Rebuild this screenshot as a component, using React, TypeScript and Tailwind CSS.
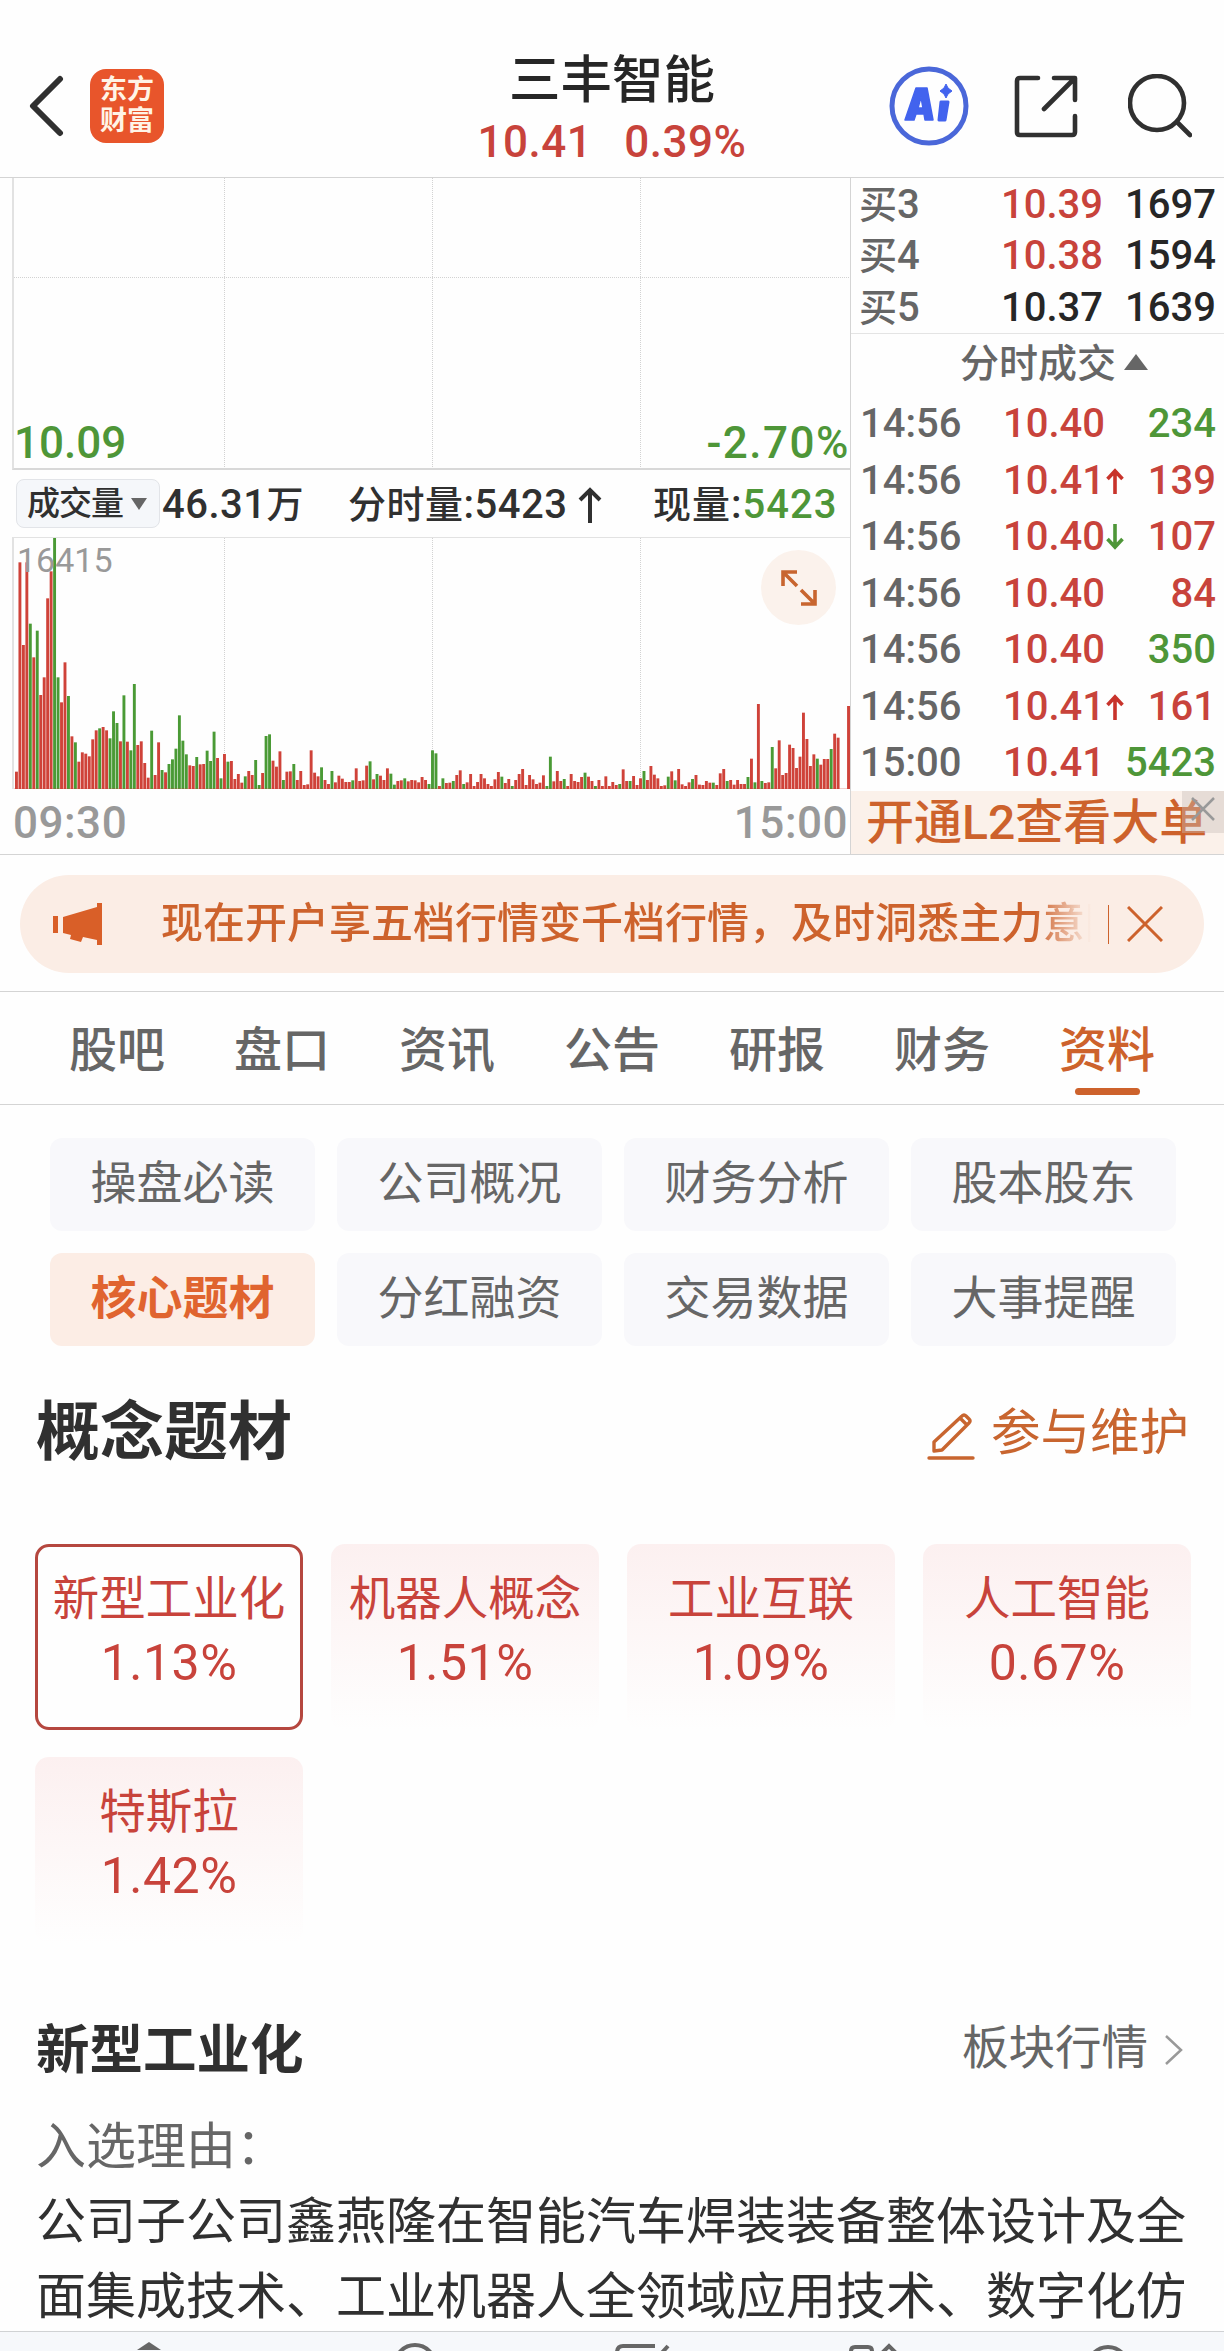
import clsx from "clsx";

type Trade = {
  time: string;
  price: string;
  volume: string;
  up: boolean;
  arrow?: "up" | "down";
};

const bids = [
  { label: "买3", price: "10.39", volume: "1697", up: true },
  { label: "买4", price: "10.38", volume: "1594", up: true },
  { label: "买5", price: "10.37", volume: "1639", up: false },
];

const trades: Trade[] = [
  { time: "14:56", price: "10.40", volume: "234", up: false },
  { time: "14:56", price: "10.41", volume: "139", up: true, arrow: "up" },
  { time: "14:56", price: "10.40", volume: "107", up: true, arrow: "down" },
  { time: "14:56", price: "10.40", volume: "84", up: true },
  { time: "14:56", price: "10.40", volume: "350", up: false },
  { time: "14:56", price: "10.41", volume: "161", up: true, arrow: "up" },
  { time: "15:00", price: "10.41", volume: "5423", up: false },
];

const tabs = ["股吧", "盘口", "资讯", "公告", "研报", "财务", "资料"];

const subTabs = [
  "操盘必读",
  "公司概况",
  "财务分析",
  "股本股东",
  "核心题材",
  "分红融资",
  "交易数据",
  "大事提醒",
];

const concepts = [
  { name: "新型工业化", change: "1.13%" },
  { name: "机器人概念", change: "1.51%" },
  { name: "工业互联", change: "1.09%" },
  { name: "人工智能", change: "0.67%" },
  { name: "特斯拉", change: "1.42%" },
];

// volume per minute, a negative value is a falling minute
const volumes = [
  52, 680, 432, 680, -496, 395, -475, 282, 335, 572, 653, -754, -335, 260, 380,
  -279, 158, -140, 82, 110, 106, 98, 149, 176, -182, 186, 176, -152, -233, -198,
  143, -281, 142, -116, -315, 132, 143, 78, 34, -175, 42, 140, -57, 50, -75,
  -89, -121, -221, -145, -104, 71, 69, -96, 74, 75, -115, -84, -172, 93, -32,
  105, -82, 84, 30, 45, 19, -38, 54, 42, -87, -12, 48, -159, -164, 85, 67, 113,
  -27, 52, 53, -75, 27, 54, 12, 14, 116, 49, 38, -65, 27, 15, -54, 20, 40, 31,
  21, 21, -26, 62, 24, 26, 70, -83, 29, -45, 40, 27, 62, -46, -13, 24, 26, -32,
  23, 27, 26, 20, 36, 27, -15, -116, -107, 9, -32, 18, 19, -24, 42, 56, -15, 20,
  45, 9, 21, 45, 32, 15, 9, 29, 51, -37, 18, 30, -9, 27, 45, 60, 12, 42, 29, 15,
  19, 41, -9, -97, 23, 54, 24, -30, 9, 45, 24, 21, 36, -49, 37, 24, -9, 27, 9,
  38, 9, 21, 12, -15, 59, 24, -24, 39, 12, 32, -54, 27, 69, 43, 32, 9, 11, -37,
  53, -26, 60, 14, 9, 20, -30, 42, 13, 12, 24, 19, -19, 12, 47, 60, -24, 27, 13,
  27, 15, 15, -36, 91, -20, 255, -24, 18, 20, -126, 62, 146, 42, 48, 133, 123,
  63, 97, 229, 150, 69, 104, -91, 73, 90, 90, -120, 166, 154, 0, 0, 249,
];

const Header: React.FC = () => (
  <header className="flex h-[178px] shrink-0 items-center border-b border-[#d4d4d4] pt-[34px]">
    <div className="flex w-[400px] items-center pl-[26px]">
      <svg className="h-[62px] w-10" viewBox="0 0 40 62" fill="none">
        <path
          d="M34 4 7 31l27 27"
          stroke="#303030"
          strokeWidth="6"
          strokeLinecap="round"
          strokeLinejoin="round"
        />
      </svg>
      <div className="ml-6 flex h-[74px] w-[74px] flex-col items-center justify-center rounded-2xl bg-[#e8552b] text-[27px] leading-[31px] font-bold text-[#fff4e6]">
        <span>东方</span>
        <span>财富</span>
      </div>
    </div>
    <div className="flex flex-1 flex-col items-center pt-4">
      <h1 className="text-[51.500px] leading-[56px] font-medium text-[#262626]">
        三丰智能
      </h1>
      <p className="flex gap-8 text-[44px] leading-[66px] font-medium tracking-[0.5px] text-[#c8433b]">
        <span>10.41</span>
        <span>0.39%</span>
      </p>
    </div>
    <div className="flex w-[400px] items-center pl-[65px]">
      <svg className="h-20 w-20" viewBox="0 0 80 80" fill="none">
        <circle cx="40" cy="40" r="37" stroke="#4a67d9" strokeWidth="5" />
        <path
          d="M16 54 27 22h11l6 32h-8l-1-6h-8l-2 6ZM29 42h5l-2-11Z"
          fill="#4263ee"
          stroke="#4263ee"
          strokeWidth="1.5"
          strokeLinejoin="round"
        />
        <path
          d="m52 36-2 18h6l3-18Z"
          fill="#4263ee"
          stroke="#4263ee"
          strokeWidth="3"
          strokeLinejoin="round"
        />
        <path
          d="m57 18 2 4 4 3-4 3-2 4-2-4-4-3 4-3Z"
          fill="#4263ee"
          stroke="#4263ee"
        />
      </svg>
      <svg
        className="ml-[45px] h-16 w-16"
        viewBox="0 0 64 64"
        fill="none"
        stroke="#303030"
        strokeWidth="4.6"
        strokeLinecap="round"
        strokeLinejoin="round"
      >
        <path d="M24 4H6q-3 0-3 3v51q0 3 3 3h52q3 0 3-3V42M40 4h21v22M60 5 30 35" />
      </svg>
      <svg
        className="ml-[50px] h-16 w-16"
        viewBox="0 0 64 64"
        fill="none"
        stroke="#303030"
        strokeWidth="4.6"
        strokeLinecap="round"
      >
        <circle cx="29" cy="29" r="27" />
        <path d="m49 48 13 13" />
      </svg>
    </div>
  </header>
);

const GridLines: React.FC<{ height: number; horizontal?: boolean }> = ({
  height,
  horizontal,
}) => (
  <svg
    className="absolute inset-0"
    width="836"
    height={height}
    stroke="#d2d2d2"
    strokeDasharray="1 1"
  >
    <path d={`M210.5 0V${height}M418.5 0V${height}M626.5 0V${height}`} />
    {horizontal && <path d="M0 99.5H836" />}
  </svg>
);

const PriceChart: React.FC = () => (
  <div className="relative ml-3 flex h-[292px] items-end justify-between border-b-2 border-l-2 border-b-[#d8d8d8] border-l-[#e2e2e2] text-[44px] leading-[50px] font-medium text-[#4e9638]">
    <GridLines height={290} horizontal />
    <span className="relative">10.09</span>
    <span className="relative tracking-[1.500px]">-2.70%</span>
  </div>
);

const VolumeInfo: React.FC = () => (
  <div className="flex h-[67px] items-center pt-0.5 pl-4 text-[40px] leading-none font-medium whitespace-nowrap text-[#303030]">
    <button className="mb-0.5 flex h-[49px] w-[144px] items-center rounded-lg border border-[#e2e4e8] bg-[#f5f7fa] pl-2.5">
      <span className="text-[33px] tracking-[-1px]">成交量</span>
      <svg className="ml-2 h-3 w-4" viewBox="0 0 16 12">
        <path d="M0 0h16L8 12Z" fill="#666" />
      </svg>
    </button>
    <span className="ml-0.5 w-[186px] tracking-[0.5px]">
      46.31<span className="text-[37px]">万</span>
    </span>
    <span className="flex w-[305px] items-center tracking-[0.5px]">
      <span className="text-[38px]">分时量</span>:5423
      <svg
        className="ml-2.5 h-9 w-6"
        viewBox="0 0 24 36"
        fill="none"
        stroke="#303030"
        strokeWidth="4"
      >
        <path d="M12 36V3M2 13 12 3l10 10" />
      </svg>
    </span>
    <span className="tracking-[1px]">
      <span className="text-[38px]">现量</span>:
      <span className="text-[#4e9638]">5423</span>
    </span>
  </div>
);

const VolumeChart: React.FC = () => (
  <div className="relative ml-3 h-[252px] border-t border-l-2 border-t-[#e2e2e2] border-l-[#e2e2e2]">
    <GridLines height={251} />
    <svg className="absolute inset-0" width="836" height="251">
      {volumes.map((v, i) => (
        <rect
          key={i}
          x={1 + i * 3.467}
          y={251 - Math.abs(v) / 3}
          width="2.9"
          height={Math.abs(v) / 3}
          fill={v < 0 ? "#4a9a35" : "#cf4239"}
        />
      ))}
      <path d="M0 250.5H836" stroke="#cf4239" strokeOpacity="0.25" />
    </svg>
    <span className="absolute top-[7px] left-[3px] text-[34px] leading-[30px] text-[#999]">
      16415
    </span>
    <button className="absolute top-3 right-[14px] flex h-[75px] w-[75px] items-center justify-center rounded-full bg-[#fbf2ec]">
      <svg
        className="h-10 w-10"
        viewBox="0 0 40 40"
        fill="none"
        stroke="#c8652f"
        strokeWidth="3.6"
      >
        <path d="M18 4H4v14M4 4l14 14M36 22v14H22M36 36 22 22" />
      </svg>
    </button>
  </div>
);

const TradeArrow: React.FC<{ direction: "up" | "down" }> = ({ direction }) => (
  <svg
    className={clsx(
      "ml-0.5 h-[26px] w-[18px]",
      direction === "up" ? "text-[#c8332b]" : "rotate-180 text-[#4e9638]",
    )}
    viewBox="0 0 18 26"
    fill="none"
    stroke="currentColor"
    strokeWidth="3.6"
  >
    <path d="M9 26V3M1.500 11 9 3l7.500 8" />
  </svg>
);

const OrderBook: React.FC = () => (
  <aside className="flex w-[374px] flex-col border-l border-[#d4d4d4] text-[40px] font-medium">
    <div className="border-b border-[#e4e4e4]">
      {bids.map((bid) => (
        <div
          key={bid.label}
          className="flex h-[51.500px] items-center pt-0.5 pr-2 pl-2 leading-none text-[#262626]"
        >
          <span className="w-[142px] text-[#666]">
            <span className="text-[38px]">{bid.label[0]}</span>
            {bid.label[1]}
          </span>
          <span className={clsx(bid.up && "text-[#c8433b]")}>{bid.price}</span>
          <span className="flex-1 text-right">{bid.volume}</span>
        </div>
      ))}
    </div>
    <div className="flex h-[62px] items-center pl-[109px] text-[#666]">
      <span className="text-[39px] leading-none">分时成交</span>
      <svg className="mb-1.5 ml-2 h-4 w-6" viewBox="0 0 24 16">
        <path d="M12 0 24 16H0Z" fill="#666" />
      </svg>
    </div>
    {trades.map((trade, i) => (
      <div
        key={i}
        className="flex h-[56.500px] items-center pt-px pr-2 pl-[9px] leading-none"
      >
        <span className="w-[143px] text-[#666]">{trade.time}</span>
        <span className="w-[101px] text-[#c8433b]">{trade.price}</span>
        {trade.arrow && <TradeArrow direction={trade.arrow} />}
        <span
          className={clsx(
            "flex-1 text-right",
            trade.up ? "text-[#c8433b]" : "text-[#4e9638]",
          )}
        >
          {trade.volume}
        </span>
      </div>
    ))}
    <div className="relative flex flex-1 items-center bg-[#fbf1ea] pl-[15px] text-[48px] leading-none whitespace-nowrap text-[#cd622c]">
      开通L2查看大单
      <button className="absolute top-0 right-0 flex h-[42px] w-[42px] items-start justify-center bg-[#c8bfba]/40 pt-1.5">
        <svg
          className="h-6 w-6"
          viewBox="0 0 24 24"
          stroke="#999"
          strokeWidth="2.5"
        >
          <path d="m1 1 22 22M23 1 1 23" />
        </svg>
      </button>
    </div>
  </aside>
);

const Notice: React.FC = () => (
  <div className="shrink-0 border-b border-[#d4d4d4] px-5 pt-5 pb-[18px]">
    <div className="flex h-[98px] items-center rounded-full bg-[#fbede5] pl-8 text-[#cd622c]">
      <svg className="h-[44px] w-[52px]" viewBox="0 0 52 44" fill="#d95f28">
        <path d="M1 14h5v17H1ZM11 15 45 5V1h5v42h-5v-5l-14-3-2 5-11-3 1-4-8-2Z" />
      </svg>
      <p className="ml-[57px] w-[930px] overflow-hidden bg-linear-to-r from-[#cd622c] from-94% to-transparent bg-clip-text text-[42px] leading-[60px] font-medium whitespace-nowrap text-transparent">
        现在开户享五档行情变千档行情，及时洞悉主力意图
      </p>
      <span className="ml-[17px] h-[39px] w-px bg-[#cd622c]" />
      <svg
        className="ml-[18px] h-9 w-9"
        viewBox="0 0 36 36"
        stroke="#cd622c"
        strokeWidth="3"
      >
        <path d="m1 1 34 34M35 1 1 35" />
      </svg>
    </div>
  </div>
);

const Tabs: React.FC = () => (
  <nav className="flex h-[113px] shrink-0 justify-center border-b border-[#d4d4d4]">
    {tabs.map((tab) => (
      <button
        key={tab}
        className={clsx(
          "flex w-[165px] flex-col items-center pt-[25px] text-[48px] leading-[68px] font-medium",
          tab === "资料" ? "text-[#cd622c]" : "text-[#666]",
        )}
      >
        {tab}
        {tab === "资料" && (
          <span className="mt-[3px] h-[7px] w-[65px] rounded-full bg-[#cd622c]" />
        )}
      </button>
    ))}
  </nav>
);

const SubTabs: React.FC = () => (
  <div className="grid shrink-0 grid-cols-4 gap-[22px] pt-[33px] pr-12 pl-[50px]">
    {subTabs.map((tab) => (
      <button
        key={tab}
        className={clsx(
          "h-[93px] rounded-xl pb-1 text-[46px] leading-none",
          tab === "核心题材"
            ? "bg-[#fcede5] font-bold text-[#e0642f]"
            : "bg-[#f8f8fb] text-[#666]",
        )}
      >
        {tab}
      </button>
    ))}
  </div>
);

const Concepts: React.FC = () => (
  <section className="shrink-0 pr-[33px] pl-[35px]">
    <div className="flex h-[198px] items-center justify-between pb-6">
      <h2 className="pl-px text-[64px] leading-none font-bold text-[#303030]">
        概念题材
      </h2>
      <a className="flex items-center pt-0.5 pr-0.5 text-[49.500px] leading-none text-[#c8652f]">
        <svg
          className="mt-1 mr-4 h-12 w-12"
          viewBox="0 0 48 48"
          fill="none"
          stroke="#c8652f"
          strokeWidth="3.400"
          strokeLinecap="round"
          strokeLinejoin="round"
        >
          <path d="M7 39v-9L35 4q2-2 4 0l3 3q2 2 0 4L15 38ZM33 6l7 7M2 46h44" />
        </svg>
        参与维护
      </a>
    </div>
    <div className="grid grid-cols-4 gap-x-7 gap-y-[27px]">
      {concepts.map((concept, i) => (
        <div
          key={concept.name}
          className={clsx(
            "flex h-[186px] flex-col items-center rounded-[14px] text-[#c8433b]",
            i === 0
              ? "border-[3px] border-[#b5473f] pt-[20px]"
              : "bg-linear-to-b from-[#fcf0f0] to-[#fefefe] pt-[23px]",
          )}
        >
          <span className="text-[46.500px] leading-[64px]">{concept.name}</span>
          <span className="text-[50px] leading-[64px] tracking-[0.5px]">
            {concept.change}
          </span>
        </div>
      ))}
    </div>
  </section>
);

const ConceptDetail: React.FC = () => (
  <section className="h-[388px] shrink-0 px-9 pt-[70px] text-[50px]">
    <div className="flex h-[76px] items-center justify-between">
      <h3 className="text-[53.500px] leading-none font-bold text-[#303030]">
        新型工业化
      </h3>
      <a className="flex items-center pb-1.5 text-[46.500px] leading-none text-[#666]">
        板块行情
        <svg
          className="mt-1 mr-1 ml-4 h-8 w-5"
          viewBox="0 0 20 32"
          fill="none"
          stroke="#999"
          strokeWidth="2.500"
        >
          <path d="m2 2 15 14L2 30" />
        </svg>
      </a>
    </div>
    <p className="mt-5 leading-[76px] text-[#666]">入选理由：</p>
    <p className="leading-[75px] text-[#303030]">
      公司子公司鑫燕隆在智能汽车焊装装备整体设计及全面集成技术、工业机器人全领域应用技术、数字化仿
    </p>
  </section>
);

const BottomBar: React.FC = () => (
  <footer className="flex h-5 shrink-0 overflow-hidden border-t border-[#d0d2d4] bg-[#f6f8fb] pl-[124px] text-[#666]">
    <svg className="h-[50px] w-[50px]" viewBox="0 0 50 50">
      <path d="m25 10 12 8H13Z" fill="currentColor" />
    </svg>
    <svg
      className="ml-[216px] h-[50px] w-[50px]"
      viewBox="0 0 50 50"
      fill="none"
    >
      <circle cx="25" cy="33" r="20" stroke="currentColor" strokeWidth="4" />
    </svg>
    <svg
      className="ml-[173px] h-[50px] w-[60px]"
      viewBox="0 0 60 50"
      fill="none"
      stroke="currentColor"
      strokeWidth="4"
    >
      <path d="M42 14H10q-6 0-6 7v27M46 24l9-10" />
    </svg>
    <svg
      className="ml-[175px] h-[50px] w-[54px]"
      viewBox="0 0 54 50"
      fill="none"
      stroke="currentColor"
      strokeWidth="4"
    >
      <path d="M3 48V19q0-4 4-4h13q4 0 4 4v29M32 23l9-9 9 9" />
    </svg>
    <svg
      className="ml-[181px] h-[50px] w-[50px]"
      viewBox="0 0 50 50"
      fill="none"
    >
      <circle cx="25" cy="35" r="20" stroke="currentColor" strokeWidth="4" />
    </svg>
  </footer>
);

const App: React.FC = () => {
  return (
    <div className="flex h-[2351px] w-[1224px] flex-col overflow-hidden bg-[#fefefe] font-[Roboto,'Noto_Sans_CJK_SC',sans-serif]">
      <Header />
      <div className="flex h-[677px] shrink-0 border-b border-[#d4d4d4]">
        <div className="w-[850px]">
          <PriceChart />
          <VolumeInfo />
          <VolumeChart />
          <div className="flex justify-between pt-[7px] pr-0.5 pl-[13px] text-[44px] leading-[54px] font-medium text-[#999]">
            <span className="tracking-[0.5px]">09:30</span>
            <span className="tracking-[0.5px]">15:00</span>
          </div>
        </div>
        <OrderBook />
      </div>
      <Notice />
      <Tabs />
      <SubTabs />
      <Concepts />
      <ConceptDetail />
      <BottomBar />
    </div>
  );
};

export default App;
